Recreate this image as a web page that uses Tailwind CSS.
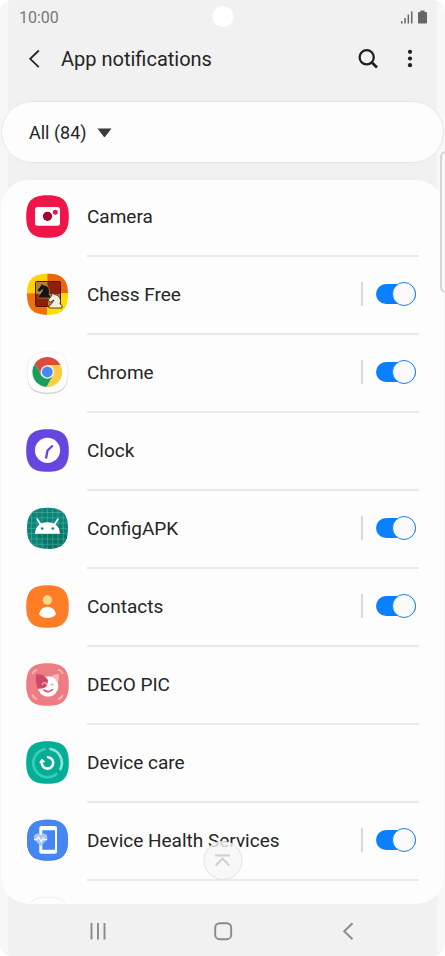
<!DOCTYPE html>
<html lang="en">
<head>
    <meta charset="UTF-8">
    <meta name="viewport" content="width=device-width, initial-scale=1.0">
    <title>App notifications</title>
    <script src="https://cdn.jsdelivr.net/npm/@tailwindcss/browser@4"></script>
</head>
<body class="bg-white font-[Roboto,sans-serif] text-[#252525]">
    <svg class="absolute size-0">
        <symbol id="tile" viewBox="0 0 43 43"><path d="M21.5 .2C37 .2 42.8 6 42.8 21.5S37 42.8 21.5 42.8 .2 37 .2 21.5 6 .2 21.5 .2Z"/></symbol>
        <clipPath id="tile-clip"><path d="M21.5 .8C36 .8 42 6.500 42 21.300S36 41.800 21.500 41.800 1 36 1 21.300 7 .8 21.500 .8Z"/></clipPath>
    </svg>

    <div class="relative flex flex-col h-screen overflow-hidden rounded-xl px-2 bg-[linear-gradient(90deg,#f7f7f7_8px,#f1f1f1_8px,#f1f1f1_calc(100%-8px),#f7f7f7_calc(100%-8px))]">
        <!-- Status bar -->
        <div class="relative flex items-center justify-between h-[34px] shrink-0 pl-[11px] pr-[9px] text-base text-[#777777]">
            <span class="pt-0.5">10:00</span>
            <div class="absolute left-1/2 top-1.5 size-[21px] -translate-x-1/2 rounded-full bg-white"></div>
            <svg class="w-[27px] h-[14px]" viewBox="0 0 27 14" fill="#666666">
                <path d="M0 11h1.500v2.500H0zM3.300 8h1.500v5.500H3.300zM6.600 4.500h1.500v9H6.600zM10 1.500h1.500v12H10z"/>
                <path d="M19.500 .5h4v1.500H25q1 0 1 1V12.500q0 1-1 1h-7q-1 0-1-1V3q0-1 1-1h1.500z"/>
            </svg>
        </div>

        <!-- Header -->
        <header class="flex items-center h-[50px] shrink-0 pl-3 pr-[15px]">
            <button aria-label="Back" class="w-[41px] h-8 pl-2">
                <svg class="size-5" viewBox="0 0 20 20" fill="none" stroke="#252525" stroke-width="1.800"><path d="M10.800 1.500 2.200 9.800l8.600 8.400"/></svg>
            </button>
            <h1 class="text-xl">App notifications</h1>
            <button aria-label="Search" class="ml-auto size-6 grid place-items-center">
                <svg class="size-5" viewBox="0 0 20 20" fill="none" stroke="#202020" stroke-width="2.300"><circle cx="8.700" cy="8.300" r="7.100"/><path d="m13.600 13.200 5.400 5.300" stroke-width="2.800"/></svg>
            </button>
            <button aria-label="More options" class="ml-[18px] size-6 grid place-items-center">
                <svg class="size-5" viewBox="0 0 20 20" fill="#202020"><circle cx="10" cy="2.800" r="2.100"/><circle cx="10" cy="9.500" r="2.100"/><circle cx="10" cy="16.200" r="2.100"/></svg>
            </button>
        </header>

        <!-- Filter -->
        <button class="flex items-center h-[62px] shrink-0 mt-[17px] -mx-[7px] pt-0.5 pl-[27px] rounded-[31px] bg-[#fdfdfd] border border-[#e6e6e6] text-lg">
            All (84)
            <svg class="ml-2.5 w-[15px] h-[10px]" viewBox="0 0 15 10" fill="#3a3a3a"><path d="M.5 .5h14l-6.200 8q-.8 1-1.600 0z"/></svg>
        </button>

        <!-- App list -->
        <main class="relative flex-1 min-h-0 mt-[17px] -mx-[7px] rounded-[28px] bg-[#fdfdfd] overflow-hidden">
            <ul class="-mt-px text-[19px]">
                <li class="flex items-center h-[78px] px-[25px] gap-[18px]">
                    <svg class="size-[43px] mb-[3px] shrink-0" viewBox="0 0 43 43">
                        <use href="#tile" fill="#f01548"/>
                        <rect x="9" y="12" width="25" height="18.700" rx="2.500" fill="#fff"/>
                        <circle cx="21.500" cy="21.300" r="4.600" fill="#a3002f"/>
                        <circle cx="29.300" cy="17.200" r="2.500" fill="#e51a4c"/>
                    </svg>
                    <div class="flex flex-1 items-center h-full border-b-2 border-[#e9e9e9]">Camera</div>
                </li>
                <li class="flex items-center h-[78px] px-[25px] gap-[18px]">
                    <svg class="size-[43px] mb-[3px] shrink-0" viewBox="0 0 43 43">
                        <g clip-path="url(#tile-clip)">
                            <path d="M0 0h21.300v20.300H0z" fill="#ffd20a"/>
                            <path d="M21.300 0H43v20.300H21.300z" fill="#ec650b"/>
                            <path d="M0 20.300h21.300V43H0z" fill="#f1700a"/>
                            <path d="M21.300 20.300H43V43H21.300z" fill="#ffdc00"/>
                        </g>
                        <rect x="9.500" y="8.500" width="25" height="25" rx="1" fill="#8d2008" stroke="#571405"/>
                        <path d="M10 9h11.500v12H10zM22 21h12v12H22z" fill="#b98038"/>
                        <path d="M12 25v-2.500l2-1 3-5-3.700 2.500-2.300-1.700 4-5V10l2.500 2c5 .5 7 4.500 5.500 9.500l1.500 1V25z" fill="#151515" stroke="#d7b17a" stroke-width=".5"/>
                        <path d="M23 35v-2.500l2-1 3-4.500-3.700 2-2.300-1.800 4-5V19.500l2.500 2c5 .8 7 4.500 5.500 9.500l2 1.500V35z" fill="#f4eddf" stroke="#302010" stroke-width=".8"/>
                    </svg>
                    <div class="flex flex-1 items-center h-full border-b-2 border-[#e9e9e9]">
                        <label for="chess">Chess Free</label>
                        <span class="ml-auto mr-[13px] mb-0.5 w-0.5 h-6 bg-[#d9d9d9]"></span>
                        <input id="chess" type="checkbox" role="switch" checked class="relative appearance-none w-10 h-5 mr-[3px] mb-0.5 rounded-full bg-[#b8b8b8] checked:bg-[#0a80ff] after:absolute after:right-0 after:-top-0.5 after:size-6 after:rounded-full after:bg-[#fafafa] after:border after:border-[#1681f5]">
                    </div>
                </li>
                <li class="flex items-center h-[78px] px-[25px] gap-[18px]">
                    <svg class="size-[43px] mb-[3px] shrink-0 overflow-visible" viewBox="0 0 43 43">
                        <path d="M21.500 1.800C36 1.800 42 7.500 42 22.300S36 42.800 21.500 42.800 1 37 1 22.300 7 1.800 21.500 1.800Z" fill="#bcbcbc"/>
                        <path d="M21.500 .8C36 .8 42 6.500 42 21.300S36 41.800 21.500 41.800 1 36 1 21.300 7 .8 21.500 .8Z" fill="#fff" stroke="#e8e8e8" stroke-width=".6"/>
                        <g transform="translate(21.300 21)">
                            <path d="M-12.500-8.250A15 15 0 0 1 13.400-6.700H0L-5.800 3.350Z" fill="#dc4b3e"/>
                            <path d="M13.400-6.700A15 15 0 0 1-.9 14.970L5.800 3.350 0-6.700Z" fill="#ffcd42"/>
                            <path d="M-.9 14.970A15 15 0 0 1-12.500-8.250L-5.800 3.350H5.800Z" fill="#17a05d"/>
                            <circle r="6.800" fill="#f4f4f4"/>
                            <circle r="5.400" fill="#4787f0"/>
                        </g>
                    </svg>
                    <div class="flex flex-1 items-center h-full border-b-2 border-[#e9e9e9]">
                        <label for="chrome">Chrome</label>
                        <span class="ml-auto mr-[13px] mb-0.5 w-0.5 h-6 bg-[#d9d9d9]"></span>
                        <input id="chrome" type="checkbox" role="switch" checked class="relative appearance-none w-10 h-5 mr-[3px] mb-0.5 rounded-full bg-[#b8b8b8] checked:bg-[#0a80ff] after:absolute after:right-0 after:-top-0.5 after:size-6 after:rounded-full after:bg-[#fafafa] after:border after:border-[#1681f5]">
                    </div>
                </li>
                <li class="flex items-center h-[78px] px-[25px] gap-[18px]">
                    <svg class="size-[43px] mb-[3px] shrink-0" viewBox="0 0 43 43">
                        <use href="#tile" fill="#6547df"/>
                        <circle cx="21.500" cy="21.300" r="12.600" fill="#fff"/>
                        <path d="m26.800 16.500-5.300 5-1.500 8" fill="none" stroke="#6547df" stroke-width="2.300" stroke-linejoin="round"/>
                    </svg>
                    <div class="flex flex-1 items-center h-full border-b-2 border-[#e9e9e9]">Clock</div>
                </li>
                <li class="flex items-center h-[78px] px-[25px] gap-[18px]">
                    <svg class="size-[43px] mb-[3px] shrink-0" viewBox="0 0 43 43">
                        <g clip-path="url(#tile-clip)">
                            <path d="M0 0h43v43H0z" fill="#098577"/>
                            <path d="m9 26.700 14 16H43V32L32.500 18z" fill="#077466"/>
                            <path d="M5.500 0v43M10.800 0v43M16.100 0v43M21.400 0v43M26.700 0v43M32 0v43M37.300 0v43M0 5.500h43M0 10.800h43M0 16.100h43M0 21.400h43M0 26.700h43M0 32h43M0 37.300h43" stroke="#5bb5aa" stroke-width=".5"/>
                        </g>
                        <path d="M9 26.700C9.500 19 14.500 15.300 21.500 15.300S33.500 19 34 26.700Z" fill="#fff"/>
                        <path d="m11.300 12.300 3.200 5M31.800 12.300l-3.200 5" stroke="#fff" stroke-width="1.800" stroke-linecap="round"/>
                        <circle cx="16.200" cy="21.500" r="1.300" fill="#098577"/>
                        <circle cx="26.800" cy="21.500" r="1.300" fill="#098577"/>
                    </svg>
                    <div class="flex flex-1 items-center h-full border-b-2 border-[#e9e9e9]">
                        <label for="configapk">ConfigAPK</label>
                        <span class="ml-auto mr-[13px] mb-0.5 w-0.5 h-6 bg-[#d9d9d9]"></span>
                        <input id="configapk" type="checkbox" role="switch" checked class="relative appearance-none w-10 h-5 mr-[3px] mb-0.5 rounded-full bg-[#b8b8b8] checked:bg-[#0a80ff] after:absolute after:right-0 after:-top-0.5 after:size-6 after:rounded-full after:bg-[#fafafa] after:border after:border-[#1681f5]">
                    </div>
                </li>
                <li class="flex items-center h-[78px] px-[25px] gap-[18px]">
                    <svg class="size-[43px] mb-[3px] shrink-0" viewBox="0 0 43 43">
                        <use href="#tile" fill="#ff7d26"/>
                        <circle cx="21.400" cy="15" r="4.700" fill="#ffd88c"/>
                        <path d="M13 29.500C14 24.500 17 21.700 21.500 21.700S29 24.500 30 29.500C27.500 32 25 33 21.500 33S15.500 32 13 29.500Z" fill="#fff"/>
                    </svg>
                    <div class="flex flex-1 items-center h-full border-b-2 border-[#e9e9e9]">
                        <label for="contacts">Contacts</label>
                        <span class="ml-auto mr-[13px] mb-0.5 w-0.5 h-6 bg-[#d9d9d9]"></span>
                        <input id="contacts" type="checkbox" role="switch" checked class="relative appearance-none w-10 h-5 mr-[3px] mb-0.5 rounded-full bg-[#b8b8b8] checked:bg-[#0a80ff] after:absolute after:right-0 after:-top-0.5 after:size-6 after:rounded-full after:bg-[#fafafa] after:border after:border-[#1681f5]">
                    </div>
                </li>
                <li class="flex items-center h-[78px] px-[25px] gap-[18px]">
                    <svg class="size-[43px] mb-[3px] shrink-0" viewBox="0 0 43 43">
                        <use href="#tile" fill="#ed7d82"/>
                        <path d="M6.500 11q.7-3.500 4.700-4.300M32 6.700q4 .8 4.700 4.300M6.500 31.500q.7 3.800 4.700 4.500M32 36q4-.7 4.700-4.500" fill="none" stroke="#f7b0b2" stroke-width="2"/>
                        <path d="M22 15.500q5-4.500 10.500-4.500 1.300 5-1.500 11z" fill="#f9b6b4"/>
                        <circle cx="22" cy="23.500" r="10.300" fill="#fff"/>
                        <path d="M10.300 11q7.500-.3 11.700 6-.5 6.500-3 7.500-2.500 1.500-7.500 1.300Q9 18 10.300 11Z" fill="#d04869"/>
                        <path d="M16 22q.5-2.500 2.500-2.300t2 2.300M24.500 21.500h3.200" fill="none" stroke="#f5a5aa" stroke-width="1.300"/>
                        <path d="M18 27q4.500 3.500 8.500-.5" fill="none" stroke="#dc526f" stroke-width="1.600" stroke-linecap="round"/>
                    </svg>
                    <div class="flex flex-1 items-center h-full border-b-2 border-[#e9e9e9]">DECO PIC</div>
                </li>
                <li class="flex items-center h-[78px] px-[25px] gap-[18px]">
                    <svg class="size-[43px] mb-[3px] shrink-0" viewBox="0 0 43 43">
                        <use href="#tile" fill="#05ad96"/>
                        <g fill="none" stroke-linecap="round" stroke-width="2.700">
                            <path d="M24.500 8A14.200 14.200 0 0 1 34.500 28" stroke="#8be5d4"/>
                            <path d="M18.500 8.100A14.200 14.200 0 1 0 30.500 33" stroke="#38cdb5"/>
                        </g>
                        <path d="M22 16.200a5.700 5.700 0 1 1-6.200 5.300" fill="none" stroke="#fff" stroke-width="2.600" stroke-linecap="round"/>
                        <path d="m13 22 2.800-4.200L19.500 21z" fill="#fff"/>
                    </svg>
                    <div class="flex flex-1 items-center h-full border-b-2 border-[#e9e9e9]">Device care</div>
                </li>
                <li class="flex items-center h-[78px] px-[25px] gap-[18px]">
                    <svg class="size-[43px] mb-[3px] shrink-0" viewBox="0 0 43 43">
                        <g clip-path="url(#tile-clip)">
                            <path d="M0 0h43v43H0z" fill="#3d73d8"/>
                            <path d="M21.500 0C36 0 43 6 43 20.500S36 41 21.500 41 0 35 0 20.500 7 0 21.500 0Z" fill="#4586f3"/>
                        </g>
                        <rect x="13.300" y="7" width="17.700" height="27.700" rx="2" fill="#fff"/>
                        <path d="M16.300 11.300H29v19.400H16.300z" fill="#4586f3"/>
                        <path d="m14.700 27.300-5.800-6.200c-3-3.800 2.200-9.500 5.800-5 3.600-4.500 8.800 1.200 5.800 5z" fill="#a9c8fb"/>
                        <path d="M8 20.700h2.700l1.800-2.700 2.700 4.500 1.900-3 1.300 1.200h2.800" fill="none" stroke="#fff" stroke-width="1.200"/>
                    </svg>
                    <div class="flex flex-1 items-center h-full border-b-2 border-[#e9e9e9]">
                        <label for="health">Device Health Services</label>
                        <span class="ml-auto mr-[13px] mb-0.5 w-0.5 h-6 bg-[#d9d9d9]"></span>
                        <input id="health" type="checkbox" role="switch" checked class="relative appearance-none w-10 h-5 mr-[3px] mb-0.5 rounded-full bg-[#b8b8b8] checked:bg-[#0a80ff] after:absolute after:right-0 after:-top-0.5 after:size-6 after:rounded-full after:bg-[#fafafa] after:border after:border-[#1681f5]">
                    </div>
                </li>
                <li class="flex items-center h-[78px] px-[25px] gap-[18px]">
                    <svg class="size-[43px] mb-[3px] shrink-0" viewBox="0 0 43 43"><use href="#tile" fill="#fff" stroke="#ececec"/></svg>
                </li>
            </ul>
            <button aria-label="Go to top" class="absolute left-1/2 bottom-6 size-[39px] -translate-x-1/2 grid place-items-center rounded-full bg-[#f6f6f6]/80 border border-[#e2e2e2]">
                <svg class="size-4" viewBox="0 0 16 16" fill="none" stroke="#cfcfcf" stroke-width="1.800"><path d="M.5 2.500h15M1.200 12.500 8 5.500l6.800 7"/></svg>
            </button>
        </main>

        <!-- Navigation bar -->
        <nav class="grid grid-cols-3 items-center justify-items-center h-[52px] shrink-0 px-[27px] pt-0.5">
            <button aria-label="Recents"><svg class="size-5" viewBox="0 0 20 20" stroke="#8a8a8a" stroke-width="1.900"><path d="M3.500 2v16.500M10 2v16.500M16.500 2v16.500"/></svg></button>
            <button aria-label="Home"><svg class="size-5" viewBox="0 0 20 20" fill="none" stroke="#8a8a8a" stroke-width="1.900"><rect x="2.200" y="2.200" width="16" height="16" rx="4.500"/></svg></button>
            <button aria-label="Back"><svg class="size-5" viewBox="0 0 20 20" fill="none" stroke="#8a8a8a" stroke-width="1.900"><path d="m14.500 2.200-8.300 8 8.300 8"/></svg></button>
        </nav>
    </div>

    <!-- Edge panel handle -->
    <div class="fixed -right-[7px] top-[151px] w-3 h-[142px] rounded-md border-2 border-[#d6d6d6] bg-[#f9f9f9]"></div>
</body>
</html>
